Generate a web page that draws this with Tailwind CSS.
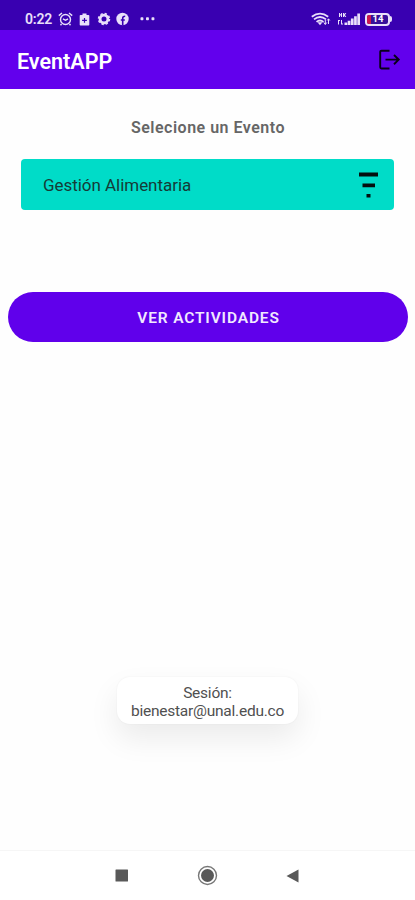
<!DOCTYPE html>
<html lang="es">
<head>
<meta charset="utf-8">
<title>EventAPP</title>
<script src="https://cdn.jsdelivr.net/npm/@tailwindcss/browser@4"></script>
</head>
<body class="bg-white">
<div class="flex h-[900px] w-[415px] flex-col overflow-hidden bg-[#fefefe] font-[Roboto,sans-serif]">
  <div class="flex h-[30px] shrink-0 items-center justify-between bg-[#3900b1] pt-[8px] pr-[23px] pl-[25px] text-[#e9e0fa]">
    <div class="flex items-center">
      <span class="w-[33px] text-[14px] leading-none font-semibold tracking-[-0.200px] whitespace-nowrap">0:22</span>
      <svg class="h-[14px] w-[15px]" viewBox="0 0 15 14" fill="none" stroke="currentColor" stroke-width="1.400"><circle cx="7.5" cy="7.5" r="5"/><path d="M.8 3.6 4 1M14.2 3.6 11 1M5 6.8l2.5 1.5L10 6.8M3.5 12 2.5 13.3M11.5 12l1 1.3"/></svg>
      <svg class="ml-[6px] h-[13px] w-[11px]" viewBox="0 0 11 13"><path fill="currentColor" fill-rule="evenodd" d="M3.500 .5h4v1.500H9.500q.8 0 .8.8v9q0 .8-.8.8h-8q-.8 0-.8-.8v-9q0-.8.8-.8h2zM4.900 5v1.800H3.100v1.200H4.900v1.800H6.100V8H7.900V6.800H6.100V5z"/></svg>
      <svg class="ml-[7px] h-[14px] w-[14px]" viewBox="0 0 14 14" fill="none" stroke="currentColor"><circle cx="7" cy="7" r="3.900" stroke-width="2.800"/><circle cx="7" cy="7" r="5.500" stroke-width="1.500" stroke-dasharray="2.320 2"/></svg>
      <svg class="ml-[5px] h-[14px] w-[13px]" viewBox="0 0 13 14"><circle cx="6.500" cy="7" r="6.200" fill="currentColor"/><path d="M6.700 13.500V6.200q0-2 2.500-2M4.800 8h4" fill="none" stroke="#3900b1" stroke-width="1.600"/></svg>
      <svg class="ml-[11px] h-[4px] w-[15px]" viewBox="0 0 15 4" fill="currentColor"><rect x=".5" y=".3" width="2.900" height="2.900" rx=".8"/><rect x="6" y=".3" width="2.900" height="2.900" rx=".8"/><rect x="11.500" y=".3" width="2.900" height="2.900" rx=".8"/></svg>
    </div>
    <div class="flex items-center">
      <svg class="h-[14px] w-[20px]" viewBox="0 0 20 14" fill="none" stroke="currentColor" stroke-width="1.800"><path d="M.8 4.800Q9 -1.600 17.200 4.800M3 7.400Q9 2.600 15 7.400M5.500 9.900Q9 7 12.500 9.900"/><path d="M6.500 10.300h5L9 13.300z" fill="currentColor" stroke="none"/><path d="M14.300 12.500V8M12.800 10.500l1.500 1.900 1.500-1.900M17.500 12V7M16.200 8.500l1.300-1.700 1.300 1.700" stroke-width="1"/></svg>
      <svg class="ml-[6px] h-[14px] w-[24px]" viewBox="0 0 24 14" fill="currentColor"><path d="M2 1h1v1.300h1V1h1v4H4V3.500H3V5H2zM6 1h1v1.300L8 1h1.300L8 3l1.300 2H8L7 3.800V5H6zM1 8h2v1H2v3.500H1zM4 8h1v3.500h1v1H4zM7.500 10.500h2.700v2.500H7.500zM10.700 8.700H13.400V13h-2.700zM13.900 6.500h2.700V13h-2.700zM17.100 4.200h2.700V13h-2.700zM20.300 1.500h2.700V13h-2.700z"/></svg>
      <div class="ml-[4px] flex h-[13px] w-[25px] items-center overflow-hidden rounded-[4px] border-2 border-current bg-[#38109a]">
        <span class="h-full w-[4px] shrink-0 bg-[#cc174f]"></span>
        <span class="w-[14px] text-center text-[9.500px] leading-none font-bold text-white">14</span>
      </div>
      <span class="h-[6px] w-[2px] rounded-r-sm bg-current"></span>
    </div>
  </div>
  <header class="flex h-[58.500px] shrink-0 items-center justify-between bg-[#6200ed] pr-[14px] pl-[17px]">
    <h1 class="pt-[4px] text-[21.500px] leading-none font-semibold text-white">EventAPP</h1>
    <svg class="mt-[2px] h-[22px] w-[22px]" viewBox="0 0 22 22" fill="none" stroke="#09001a" stroke-width="1.900"><path d="M10.500 1.700H2.500Q1.200 1.700 1.200 2.900V18.300Q1.200 19.500 2.500 19.500H10.500M6.500 10.600H20M15 6l4.700 4.600L15 15.200"/></svg>
  </header>
  <main class="flex grow flex-col items-center">
    <h2 class="mt-[30.500px] pl-px text-[16px] leading-[18px] font-semibold tracking-[0.500px] text-[#666]">Selecione un Evento</h2>
    <div class="mt-[22px] flex h-[51px] w-[373px] items-center justify-between rounded-[4px] bg-[#00dcc8] pr-[16px] pl-[22px]">
      <span class="pt-[2px] text-[17px] leading-none tracking-[-0.040px] text-[#153b37]">Gestión Alimentaria</span>
      <svg class="h-[26px] w-[19px]" viewBox="0 0 19 26" fill="#04100f"><path d="M0 .5h19v4H0zM3.500 11.500h12.500v3.800H3.500zM7.500 22h4v3.500h-4z"/></svg>
    </div>
    <button class="mt-[82px] h-[50px] w-[400px] rounded-full bg-[#6000eb] pt-[3px] pl-[2px] text-[15.500px] font-semibold tracking-[0.850px] text-[#f1e9ff]">VER ACTIVIDADES</button>
    <div class="mt-[335px] flex h-[47px] w-[181px] items-center justify-center rounded-[13px] bg-white pt-[2px] text-center text-[15.500px] leading-[18px] tracking-[-0.240px] text-[#505050] shadow-[0_14px_30px_rgba(0,0,0,0.08),0_0_2px_rgba(0,0,0,0.060)]">Sesión:<br>bienestar@unal.edu.co</div>
  </main>
  <nav class="flex h-[50px] shrink-0 items-center border-t border-[#f6f6f6] bg-white pl-[115px] text-[#595959]">
    <svg class="h-[13px] w-[13px]" viewBox="0 0 13 13"><rect x=".5" y=".5" width="12.500" height="12" rx=".5" fill="currentColor"/></svg>
    <svg class="ml-[69px] h-[21px] w-[21px]" viewBox="0 0 21 21"><circle cx="10.500" cy="10.500" r="9" fill="none" stroke="#777" stroke-width="1.400"/><circle cx="10.500" cy="10.500" r="6.500" fill="currentColor"/></svg>
    <svg class="ml-[68px] h-[14px] w-[13px]" viewBox="0 0 13 14"><path d="M12.500.5v13L.5 7z" fill="currentColor"/></svg>
  </nav>
</div>
</body>
</html>
